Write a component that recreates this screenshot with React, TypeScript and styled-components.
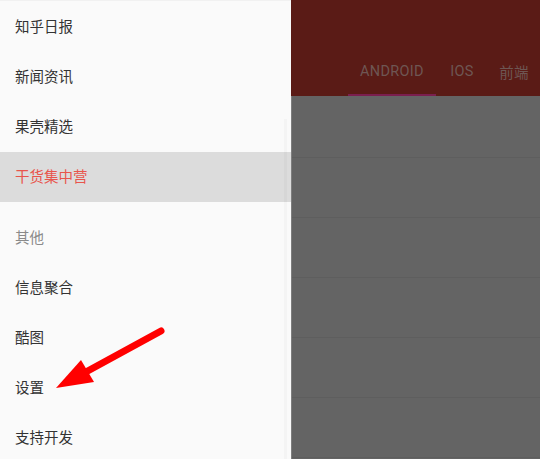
import styled, { createGlobalStyle } from "styled-components";

const GlobalStyle = createGlobalStyle`
  html, body {
    margin: 0;
    padding: 0;
    background: #646464;
  }
  body {
    font-family: "Noto Sans CJK SC", "Noto Sans", Roboto, sans-serif;
  }
`;

interface IMenuItem {
  label: string;
  active?: boolean;
}

const primaryItems: IMenuItem[] = [
  { label: "知乎日报" },
  { label: "新闻资讯" },
  { label: "果壳精选" },
  { label: "干货集中营", active: true },
];

const otherItems: IMenuItem[] = [
  { label: "信息聚合" },
  { label: "酷图" },
  { label: "设置" },
  { label: "支持开发" },
];

const tabs = [
  { label: "ANDROID", width: 88, active: true },
  { label: "IOS", width: 52 },
  { label: "前端", width: 52 },
];

const App = () => {
  return (
    <>
      <GlobalStyle />
      <Screen>
        <Drawer>
          <MenuList>
            {primaryItems.map((item) => (
              <MenuItem key={item.label} $active={item.active}>
                {item.label}
              </MenuItem>
            ))}
          </MenuList>
          <Divider />
          <MenuList>
            <SubHeader>其他</SubHeader>
            {otherItems.map((item) => (
              <MenuItem key={item.label} $active={item.active}>
                {item.label}
              </MenuItem>
            ))}
          </MenuList>
          <ScrollTrack />
        </Drawer>
        <Main>
          <Toolbar>
            <TabRow>
              {tabs.map((tab) => (
                <Tab key={tab.label} $width={tab.width} $active={tab.active}>
                  {tab.label}
                </Tab>
              ))}
            </TabRow>
          </Toolbar>
          <Content>
            {[0, 1, 2, 3, 4, 5].map((i) => (
              <ListRow key={i} />
            ))}
          </Content>
        </Main>
        <Arrow viewBox="0 0 540 459">
          <line
            x1="161"
            y1="331"
            x2="84"
            y2="373"
            stroke="#ff0000"
            strokeWidth="7"
            strokeLinecap="round"
          />
          <polygon points="56,388 81,360 94,382" fill="#ff0000" />
        </Arrow>
      </Screen>
    </>
  );
};

const Screen = styled.div`
  position: relative;
  width: 540px;
  height: 459px;
  display: flex;
  flex-direction: row;
  overflow: hidden;
`;

const Drawer = styled.div`
  position: relative;
  width: 291px;
  flex-shrink: 0;
  display: flex;
  flex-direction: column;
  padding-top: 1px;
  box-sizing: border-box;
  background-color: #fafafa;
  border-top: 1px solid #f1f1f1;
`;

const MenuList = styled.div`
  display: flex;
  flex-direction: column;
`;

const MenuItem = styled.div<{ $active?: boolean }>`
  height: 50px;
  display: flex;
  align-items: center;
  padding: 0 0 3px 15px;
  box-sizing: border-box;
  font-size: 14.5px;
  color: ${({ $active }) => ($active ? "#e8554c" : "#333333")};
  background-color: ${({ $active }) => ($active ? "#dcdcdc" : "transparent")};
`;

const SubHeader = styled(MenuItem)`
  color: #8a8a8a;
`;

const Divider = styled.div`
  height: 2px;
  margin: 8px 0 3px;
  background-color: #e6e6e6;
`;

const ScrollTrack = styled.div`
  position: absolute;
  top: 118px;
  bottom: 0;
  right: 4px;
  width: 3px;
  background-color: rgba(0, 0, 0, 0.025);
`;

const Main = styled.div`
  flex: 1;
  display: flex;
  flex-direction: column;
`;

const Toolbar = styled.div`
  height: 96px;
  display: flex;
  flex-direction: column;
  justify-content: flex-end;
  background-color: #5a1b16;
`;

const TabRow = styled.div`
  height: 48px;
  display: flex;
  flex-direction: row;
  padding-left: 57px;
`;

const Tab = styled.div<{ $width: number; $active?: boolean }>`
  width: ${({ $width }) => $width}px;
  flex-shrink: 0;
  display: flex;
  align-items: center;
  justify-content: center;
  box-sizing: border-box;
  font-family: Roboto, "Noto Sans CJK SC", sans-serif;
  font-size: 14.5px;
  letter-spacing: 0.3px;
  color: #6e5653;
  border-bottom: 2px solid
    ${({ $active }) => ($active ? "#7b1f4f" : "transparent")};
  white-space: nowrap;
`;

const Content = styled.div`
  flex: 1;
  display: flex;
  flex-direction: column;
  padding-top: 2px;
  background-color: #646464;
  border-left: 1px solid #7e7e7e;
`;

const ListRow = styled.div`
  height: 60px;
  flex-shrink: 0;
  box-sizing: border-box;
  border-bottom: 1px solid #5e5e5e;
`;

const Arrow = styled.svg`
  position: absolute;
  left: 0;
  top: 0;
  width: 540px;
  height: 459px;
  pointer-events: none;
`;

export default App;
